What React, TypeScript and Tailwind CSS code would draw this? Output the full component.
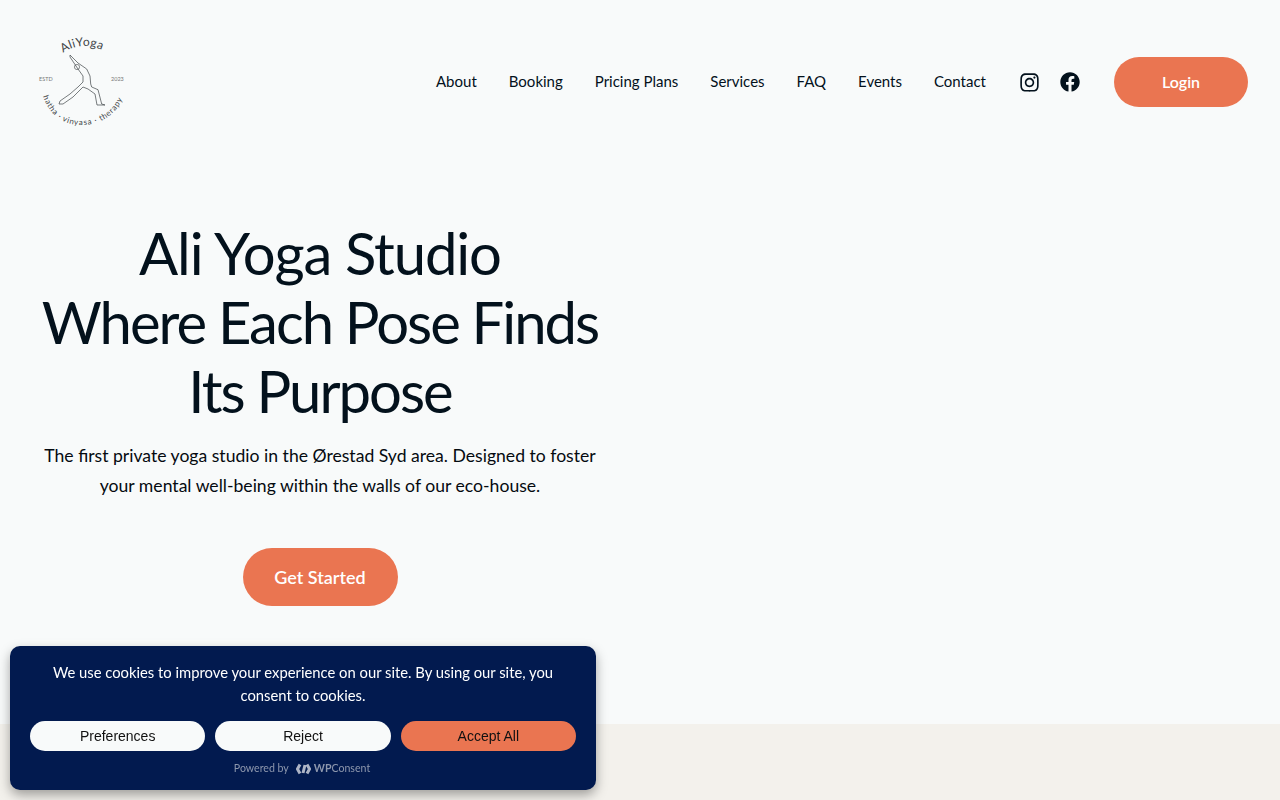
import { FaFacebook, FaInstagram } from "react-icons/fa";

const navLinks = ["About", "Booking", "Pricing Plans", "Services", "FAQ", "Events", "Contact"];

// Logo: figure in warrior pose with curved captions
const Logo = () => (
  <svg width="92" height="96" viewBox="0 0 92 96" className="text-[#3f4547] overflow-visible">
    <defs>
      <path id="logo-top" d="M 27 19 Q 48 4 76 21" />
      <path id="logo-bottom" d="M 7 62 Q 17 92 48 91 Q 77 89 89 60" />
    </defs>
    <text fontSize="12" fill="currentColor" letterSpacing="0.3" fontFamily="Lato, sans-serif">
      <textPath href="#logo-top">AliYoga</textPath>
    </text>
    <text fontSize="8" fill="currentColor" letterSpacing="0.75" fontFamily="Lato, sans-serif">
      <textPath href="#logo-bottom">hatha · vinyasa · therapy</textPath>
    </text>
    <text x="3" y="47" fontSize="5.5" fill="#777" fontFamily="Lato, sans-serif">ESTD</text>
    <text x="75" y="47" fontSize="5.5" fill="#777" fontFamily="Lato, sans-serif">2023</text>
    <path
      d="M34 21 L42 29 L50.7 35 L54 42 L54.7 50 L55.7 53 L62 55.7 L65.7 70 L69 71 L61 71 L59 60 L52 55 L47 53 L37 63 L27 70 L23 70 L24 67 L34 60 L42 53 L47 48 L47 42 L42 35 L34 23 Z"
      fill="none"
      stroke="currentColor"
      strokeWidth="0.7"
    />
    <circle cx="41" cy="33" r="2.6" fill="none" stroke="currentColor" strokeWidth="0.6" />
  </svg>
);

export default function App() {
  return (
    <div className="relative min-h-[800px] bg-[#f8fafa] font-['Lato',sans-serif] text-[#03111c] overflow-hidden">
      <header className="flex items-center justify-between pl-[36px] pr-[32px] h-[164px]">
        <Logo />
        <nav className="flex items-center">
          <ul className="flex items-center gap-[32px] text-[15px] -translate-y-px">
            {navLinks.map((link) => (
              <li key={link}>{link}</li>
            ))}
          </ul>
          <div className="flex items-center gap-[20px] ml-[33px]">
            <FaInstagram size={21} />
            <FaFacebook size={20} />
          </div>
          <button className="ml-[34px] w-[134px] h-[50px] rounded-full bg-[#ea7551] text-white text-[16px] font-semibold">
            Login
          </button>
        </nav>
      </header>

      <main className="flex flex-col items-center w-[640px] px-[32px] pt-[54px]">
        <h1 className="text-[58px] leading-[69px] text-center font-normal tracking-[-2px] whitespace-nowrap">
          <span className="tracking-[-1.1px]">Ali Yoga Studio</span>
          <br />
          Where Each Pose Finds
          <br />
          Its Purpose
        </h1>
        <p className="mt-[16px] w-[576px] text-[17.6px] leading-[30px] text-center text-[#050a10]">
          The first private yoga studio in the Ørestad Syd area. Designed to foster your mental well-being within the walls of our eco-house.
        </p>
        <button className="mt-[47px] w-[155px] h-[58px] rounded-full bg-[#ea7551] text-white text-[18px] font-semibold">
          Get Started
        </button>
      </main>

      <div className="absolute left-0 right-0 top-[724px] bottom-0 bg-[#f3f1ec]"></div>

      {/* Cookie banner */}
      <div className="fixed left-[10px] bottom-[10px] w-[586px] h-[144px] rounded-[10px] bg-[#021a4f] text-white shadow-[0_5px_12px_rgba(0,0,0,0.35)] px-[20px] pt-[15px]">
        <p className="text-[14.8px] leading-[23px] text-center px-[10px]">
          We use cookies to improve your experience on our site. By using our site, you consent to cookies.
        </p>
        <div className="flex gap-[10px] mt-[14px] font-['Liberation_Sans',sans-serif] text-[14px] text-[#111]">
          <button className="flex-1 h-[30px] rounded-full bg-[#f8fafa]">Preferences</button>
          <button className="flex-1 h-[30px] rounded-full bg-[#f8fafa]">Reject</button>
          <button className="flex-1 h-[30px] rounded-full bg-[#ea7551]">Accept All</button>
        </div>
        <div className="flex items-center justify-center gap-[7px] mt-[10px] pr-[2px] text-[10.6px] text-[#8d97ad]">
          <span>Powered by</span>
          <span className="flex items-center gap-[3px]">
            <svg width="15" height="12" viewBox="0 0 15 12" fill="none" stroke="#aeb5c6" strokeWidth="3">
              <path d="M4 1.5 L1.5 6 L4 10.5 M7 10 L9 2 M11 1.5 L13.5 6 L11 10.5" />
            </svg>
            <span>
              <b>WP</b>Consent
            </span>
          </span>
        </div>
      </div>
    </div>
  );
}
